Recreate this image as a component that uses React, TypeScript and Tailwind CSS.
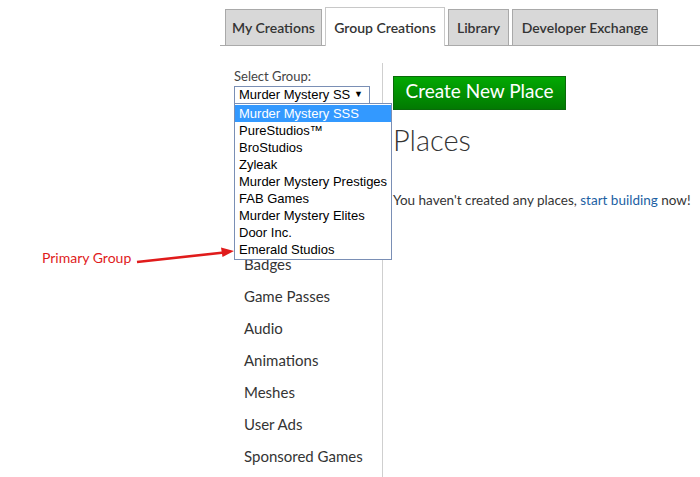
import React from 'react';

const tabs = [
    { label: 'My Creations', w: 'w-[97px]', active: false },
    { label: 'Group Creations', w: 'w-[120px]', active: true },
    { label: 'Library', w: 'w-[61px]', active: false },
    { label: 'Developer Exchange', w: 'w-[146px]', active: false },
];

const groups = [
    'Murder Mystery SSS',
    'PureStudios™',
    'BroStudios',
    'Zyleak',
    'Murder Mystery Prestiges',
    'FAB Games',
    'Murder Mystery Elites',
    'Door Inc.',
    'Emerald Studios',
];

// the items above Badges sit under the open dropdown
const navItems = ['Badges', 'Game Passes', 'Audio', 'Animations', 'Meshes', 'User Ads', 'Sponsored Games'];

const sans = "font-['Lato','Open_Sans',sans-serif]";
const arial = "font-['Liberation_Sans',Arial,sans-serif]";

const App: React.FC = () => {
    return (
        <div className={`relative w-[700px] h-[477px] bg-white overflow-hidden text-[#343434] ${sans}`}>
            <div className="ml-[220px]">
                {/* tabs */}
                <div className="flex items-end gap-[3px] pl-[5px] h-[46px] border-b border-[#aaaaaa]">
                    {tabs.map((tab) => (
                        <div
                            key={tab.label}
                            className={
                                tab.active
                                    ? `${tab.w} h-[39px] -mb-px flex items-center justify-center bg-white border border-b-0 border-[#c8c8c8] text-[14px] font-semibold text-[#343434]`
                                    : `${tab.w} h-[36px] flex items-center justify-center bg-[#d8d8d8] border border-b-0 border-[#a9a9a9] text-[14px] font-semibold text-[#343434]`
                            }
                        >
                            {tab.label}
                        </div>
                    ))}
                </div>

                <div className="flex mt-[17px]">
                    {/* sidebar */}
                    <div className="relative w-[163px] h-[414px] border-r border-[#cfcfcf] pt-[5px] pl-[14px]">
                        <div className="text-[13px] leading-[16px] text-[#444]">Select Group:</div>
                        <div className={`mt-[2px] w-[136px] h-[18px] border border-[#7a8fb5] flex items-center justify-between pl-[4px] pr-[6px] text-[13px] text-black ${arial}`}>
                            <span>Murder Mystery SS</span>
                            <span className="text-[9px]">▼</span>
                        </div>

                        <div className="mt-[144px] -ml-[14px] pl-[24px]">
                            {navItems.map((item) => (
                                <div key={item} className="h-[32px] flex items-center text-[15px] text-[#343434]">
                                    {item}
                                </div>
                            ))}
                        </div>

                        {/* open dropdown */}
                        <div className={`absolute left-[14px] top-[40px] w-[158px] border border-[#7a8fb5] bg-white py-px text-[13px] text-black ${arial}`}>
                            {groups.map((g, i) => (
                                <div
                                    key={g}
                                    className={`h-[17px] flex items-center pl-[4px] ${i === 0 ? 'bg-[#3399ff] text-white' : ''}`}
                                >
                                    {g}
                                </div>
                            ))}
                        </div>
                    </div>

                    {/* main */}
                    <div className="pl-[10px] pt-[13px]">
                        <button
                            type="button"
                            className="w-[173px] h-[34px] pb-[5px] flex items-center justify-center bg-gradient-to-b from-[#02a902] to-[#027a02] border border-[#0a6a0a] text-white text-[19px] leading-none"
                        >
                            Create New Place
                        </button>
                        <h1 className="mt-[10px] text-[29px] leading-[40px] font-light text-[#343434]">Places</h1>
                        <p className="mt-[30px] text-[13.5px] leading-[20px] text-[#343434]">
                            You haven't created any places, <span className="text-[#1c5fa3]">start building</span> now!
                        </p>
                    </div>
                </div>
            </div>

            {/* annotation */}
            <div className="absolute left-[42px] top-[249px] text-[14px] leading-[18px] text-[#e01b1b]">Primary Group</div>
            <svg className="absolute left-0 top-0" width="700" height="477" viewBox="0 0 700 477">
                <line x1="137" y1="262" x2="224" y2="252.5" stroke="#e01b1b" strokeWidth="2.6" />
                <polygon points="234,251 221,247.5 222.5,257" fill="#e01b1b" />
            </svg>
        </div>
    );
};

export default App;
